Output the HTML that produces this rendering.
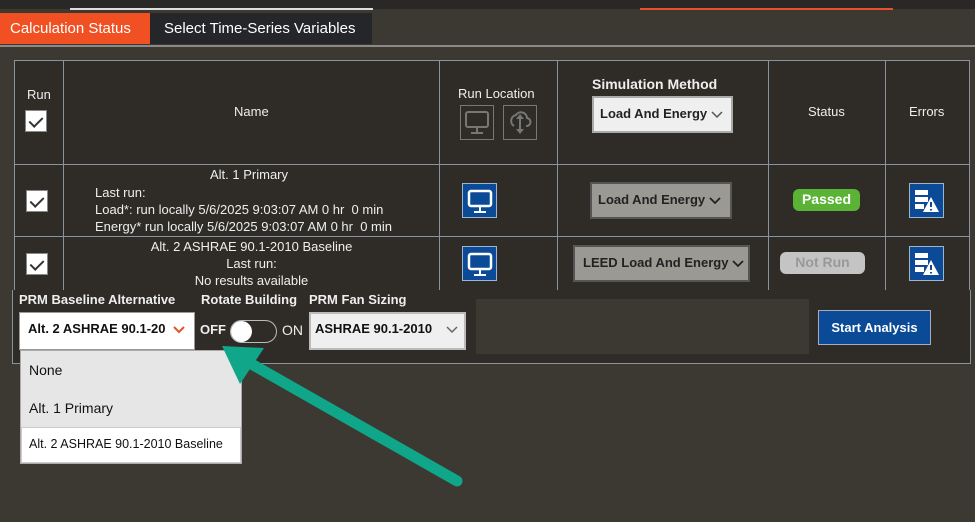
<!DOCTYPE html>
<html><head><style>
body{margin:0;width:975px;height:522px;overflow:hidden;background:#3c3832;font-family:"Segoe UI","Liberation Sans","DejaVu Sans",sans-serif;position:relative;color:#eee}
div{position:absolute;box-sizing:border-box}
.t{font-size:13px;white-space:nowrap}
.cb{width:22px;height:22px;background:#fff;border:1px solid #888}
.cb:after{content:"";position:absolute;left:6px;top:3px;width:6px;height:11px;border:solid #333;border-width:0 2px 2px 0;transform:rotate(45deg)}
.cell{background:#2f2c27;border:1px solid #8a94a0}
.bi{width:35px;height:35px;background:#0b4a96;border:1px solid #9fb3cc}
.sel{border:2px solid #555;background:#9a9994;color:#222;font-weight:bold;font-size:13px;padding:8px 6px;white-space:nowrap}
.sel svg{margin-left:4px;vertical-align:middle}
</style></head><body>
<div style="left:0;top:0;width:975px;height:9px;background:#2a2826"></div>
<div style="left:70px;top:8px;width:303px;height:2px;background:#ddd"></div>
<div style="left:640px;top:8px;width:253px;height:2px;background:#e8502a"></div>
<div style="left:0;top:13px;width:150px;height:31px;background:#f15022"></div>
<div class="t" style="left:10px;top:20px;font-size:15px;color:#fff">Calculation Status</div>
<div style="left:150px;top:13px;width:222px;height:31px;background:#24262a"></div>
<div class="t" style="left:164px;top:20px;font-size:15px;color:#fff">Select Time-Series Variables</div>
<div style="left:0;top:45px;width:975px;height:2px;background:#8b8a86"></div>

<!-- header -->
<div class="cell" style="left:14px;top:60px;width:50px;height:105px"></div>
<div class="cell" style="left:63px;top:60px;width:377px;height:105px"></div>
<div class="cell" style="left:439px;top:60px;width:119px;height:105px"></div>
<div class="cell" style="left:557px;top:60px;width:212px;height:105px"></div>
<div class="cell" style="left:768px;top:60px;width:118px;height:105px"></div>
<div class="cell" style="left:885px;top:60px;width:85px;height:105px"></div>
<div class="t" style="left:27px;top:87px">Run</div>
<div class="cb" style="left:25px;top:110px"></div>
<div class="t" style="left:234px;top:104px">Name</div>
<div class="t" style="left:458px;top:86px">Run Location</div>
<div style="left:460px;top:105px;width:34px;height:35px;border:1px solid #777"></div>
<div style="left:503px;top:105px;width:34px;height:35px;border:1px solid #777"></div>
<svg style="position:absolute;left:464px;top:110px" width="26" height="25"><rect x="2" y="2" width="22" height="15" rx="2" fill="none" stroke="#777" stroke-width="2"/><path d="M13 17v5M7 23h12" stroke="#777" stroke-width="2"/></svg>
<svg style="position:absolute;left:507px;top:109px" width="26" height="26"><path d="M7 17a6 6 0 0 1 2-11a6 6 0 0 1 11 3a4 4 0 0 1-1 8" fill="none" stroke="#777" stroke-width="2"/><path d="M13 5l-4 5h3v10h-3l4 5l4-5h-3V10h3z" fill="#777"/></svg>
<div class="t" style="left:592px;top:76px;font-weight:bold;font-size:14px">Simulation Method</div>
<div class="sel" style="left:592px;top:96px;width:141px;height:37px;background:#efefef;border-color:#aaa">Load And Energy<svg width="12" height="8"><path d="M1 1l5 5l5-5" fill="none" stroke="#555" stroke-width="1.5"/></svg></div>
<div class="t" style="left:808px;top:104px">Status</div>
<div class="t" style="left:909px;top:104px">Errors</div>

<!-- row1 -->
<div class="cell" style="left:14px;top:164px;width:50px;height:73px"></div>
<div class="cell" style="left:63px;top:164px;width:377px;height:73px"></div>
<div class="cell" style="left:439px;top:164px;width:119px;height:73px"></div>
<div class="cell" style="left:557px;top:164px;width:212px;height:73px"></div>
<div class="cell" style="left:768px;top:164px;width:118px;height:73px"></div>
<div class="cell" style="left:885px;top:164px;width:85px;height:73px"></div>
<div class="cb" style="left:26px;top:190px"></div>
<div class="t" style="left:210px;top:167px">Alt. 1 Primary</div>
<div class="t" style="left:95px;top:184px;line-height:17px">Last run:<br>Load*: run locally 5/6/2025 9:03:07 AM 0 hr&nbsp; 0 min<br>Energy* run locally 5/6/2025 9:03:07 AM 0 hr&nbsp; 0 min</div>
<div class="bi" style="left:462px;top:183px"></div>
<div class="sel" style="left:590px;top:182px;width:142px;height:37px">Load And Energy<svg width="12" height="8"><path d="M1 1l5 5l5-5" fill="none" stroke="#222" stroke-width="1.8"/></svg></div>
<div style="left:793px;top:189px;width:67px;height:22px;background:#5bb336;border-radius:6px;color:#fff;font-weight:bold;font-size:14px;text-align:center;line-height:21px">Passed</div>
<div class="bi" style="left:909px;top:183px"></div>

<!-- row2 -->
<div class="cell" style="left:14px;top:236px;width:50px;height:55px"></div>
<div class="cell" style="left:63px;top:236px;width:377px;height:55px"></div>
<div class="cell" style="left:439px;top:236px;width:119px;height:55px"></div>
<div class="cell" style="left:557px;top:236px;width:212px;height:55px"></div>
<div class="cell" style="left:768px;top:236px;width:118px;height:55px"></div>
<div class="cell" style="left:885px;top:236px;width:85px;height:55px"></div>
<div class="cb" style="left:26px;top:253px"></div>
<div class="t" style="left:63px;width:377px;text-align:center;top:238px;line-height:17px">Alt. 2 ASHRAE 90.1-2010 Baseline<br>Last run:<br>No results available</div>
<div class="bi" style="left:462px;top:246px"></div>
<div class="sel" style="left:573px;top:245px;width:177px;height:37px;padding-left:8px">LEED Load And Energy<svg width="12" height="8"><path d="M1 1l5 5l5-5" fill="none" stroke="#222" stroke-width="1.8"/></svg></div>
<div style="left:780px;top:252px;width:85px;height:22px;background:#c4c4c4;border-radius:6px;color:#999;font-weight:bold;font-size:14px;text-align:center;line-height:21px">Not Run</div>
<div class="bi" style="left:909px;top:246px"></div>

<!-- icons -->
<svg style="position:absolute;left:467px;top:189px" width="26" height="25"><rect x="2" y="2" width="22" height="15" rx="2" fill="none" stroke="#fff" stroke-width="2.5"/><path d="M13 17v5M7 23h12" stroke="#fff" stroke-width="2"/></svg>
<svg style="position:absolute;left:467px;top:252px" width="26" height="25"><rect x="2" y="2" width="22" height="15" rx="2" fill="none" stroke="#fff" stroke-width="2.5"/><path d="M13 17v5M7 23h12" stroke="#fff" stroke-width="2"/></svg>
<svg style="position:absolute;left:913px;top:187px" width="28" height="28"><rect x="2" y="3" width="13" height="5" fill="#fff"/><rect x="2" y="10" width="13" height="5" fill="#fff"/><rect x="2" y="17" width="9" height="5" fill="#fff"/><path d="M18 10l8 15h-16z" fill="#fff"/><path d="M18 15v5M18 22v1.5" stroke="#0b4a96" stroke-width="2"/></svg>
<svg style="position:absolute;left:913px;top:250px" width="28" height="28"><rect x="2" y="3" width="13" height="5" fill="#fff"/><rect x="2" y="10" width="13" height="5" fill="#fff"/><rect x="2" y="17" width="9" height="5" fill="#fff"/><path d="M18 10l8 15h-16z" fill="#fff"/><path d="M18 15v5M18 22v1.5" stroke="#0b4a96" stroke-width="2"/></svg>

<!-- bottom panel -->
<div style="left:12px;top:290px;width:959px;height:74px;background:#2f2c27;border:1px solid #8a94a0;border-top:none"></div>
<div class="t" style="left:19px;top:292px;font-weight:bold;font-size:13px">PRM Baseline Alternative</div>
<div class="t" style="left:201px;top:292px;font-weight:bold;font-size:13px">Rotate Building</div>
<div class="t" style="left:309px;top:292px;font-weight:bold;font-size:13px">PRM Fan Sizing</div>
<div style="left:19px;top:312px;width:176px;height:38px;background:#fff;border:1px solid #999"></div>
<div class="t" style="left:28px;top:321px;color:#111;font-weight:bold;font-size:13px;width:138px;overflow:hidden">Alt. 2 ASHRAE 90.1-2010</div>
<svg style="position:absolute;left:173px;top:326px" width="12" height="8"><path d="M1 1l5 5l5-5" fill="none" stroke="#e8502a" stroke-width="2"/></svg>
<div class="t" style="left:200px;top:322px;font-weight:bold;font-size:13px">OFF</div>
<div style="left:230px;top:320px;width:47px;height:23px;border:1.5px solid #bbb;border-radius:12px"></div>
<div style="left:231px;top:321px;width:21px;height:21px;border-radius:50%;background:#fff"></div>
<div class="t" style="left:282px;top:322px;font-size:14px">ON</div>
<div style="left:309px;top:312px;width:157px;height:38px;background:#efefef;border:2px solid #bbb"></div>
<div class="t" style="left:315px;top:321px;color:#111;font-weight:bold;font-size:13px">ASHRAE 90.1-2010</div>
<svg style="position:absolute;left:446px;top:326px" width="12" height="8"><path d="M1 1l5 5l5-5" fill="none" stroke="#666" stroke-width="1.5"/></svg>
<div style="left:476px;top:299px;width:333px;height:55px;background:#3c3832"></div>
<div style="left:818px;top:310px;width:113px;height:35px;background:#0b4a96;border:1px solid #aab;color:#fff;font-weight:bold;font-size:13px;text-align:center;line-height:33px">Start Analysis</div>

<!-- dropdown -->
<div style="left:20px;top:350px;width:222px;height:114px;background:#e6e6e6;border:1px solid #aaa"></div>
<div class="t" style="left:29px;top:362px;color:#111;font-size:14px">None</div>
<div class="t" style="left:29px;top:400px;color:#111;font-size:14px">Alt. 1 Primary</div>
<div style="left:21px;top:427px;width:220px;height:36px;background:#fff;border:1px solid #ccc"></div>
<div class="t" style="left:29px;top:437px;color:#111;font-size:12.5px">Alt. 2 ASHRAE 90.1-2010 Baseline</div>

<!-- arrow -->
<svg style="position:absolute;left:0;top:0" width="975" height="522"><path d="M457 481L248 362" stroke="#0fa68a" stroke-width="11" stroke-linecap="round"/><path d="M222 346L264 348L240 384z" fill="#0fa68a"/></svg>
</body></html>
